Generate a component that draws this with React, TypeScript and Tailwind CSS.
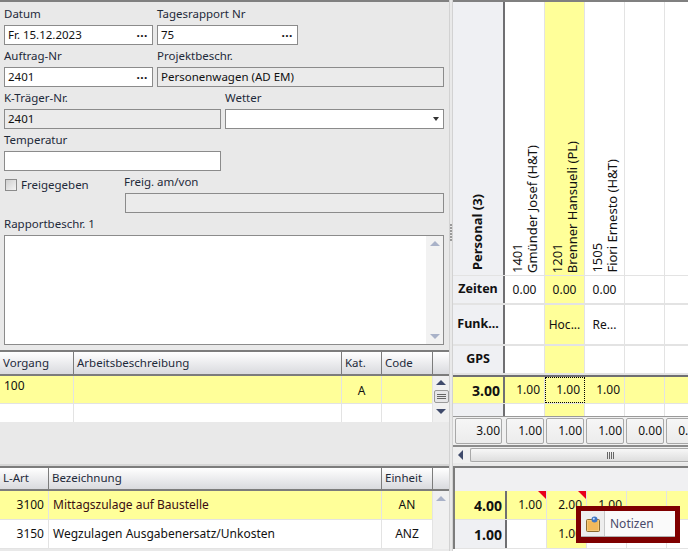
import React from "react";

const YELLOW = "bg-[#ffff99]";

function Label({ children, className = "" }: { children?: React.ReactNode; className?: string }) {
  return <div className={`font-['Roboto',sans-serif] text-[11.5px] leading-[16px] text-[#1e2a3a] ${className}`}>{children}</div>;
}

function Field({
  value,
  disabled,
  dots,
  arrow,
  className = "",
}: {
  value?: string;
  disabled?: boolean;
  dots?: boolean;
  arrow?: boolean;
  className?: string;
}) {
  return (
    <div
      className={`h-[20px] border border-[#8b8b8b] flex items-center justify-between pl-[3px] pr-[4px] font-['Roboto',sans-serif] text-[11.5px] text-[#111] ${
        disabled ? "bg-[#ebebeb]" : "bg-white"
      } ${className}`}
    >
      <span>{value}</span>
      {dots && <span className="text-[12px] leading-none font-bold tracking-[0.5px] mb-[4px]">...</span>}
      {arrow && <span className="w-0 h-0 border-x-[3px] border-x-transparent border-t-[4px] border-t-[#333]" />}
    </div>
  );
}

function HeaderCell({ children, className = "" }: { children?: React.ReactNode; className?: string }) {
  return (
    <div
      className={`flex items-center pl-[3px] pb-[1px] border-r border-[#7c7c7c] font-['Roboto',sans-serif] text-[11.5px] text-[#1e2a3a] bg-gradient-to-b from-white to-[#d9dade] ${className}`}
    >
      {children}
    </div>
  );
}

function ScrollArrow({ up, className = "" }: { up?: boolean; className?: string }) {
  return (
    <span
      className={`block w-0 h-0 border-x-[5px] border-x-transparent ${
        up ? "border-b-[5px]" : "border-t-[5px]"
      } ${className}`}
    />
  );
}

function TopGrid() {
  const cols = "grid-cols-[74px_268px_40px_51px_16px]";
  return (
    <div className="relative">
      <div className={`grid ${cols} h-[26px] border-y-2 border-y-[#7c7c7c] border-r border-r-[#7c7c7c]`}>
        <HeaderCell>Vorgang</HeaderCell>
        <HeaderCell>Arbeitsbeschreibung</HeaderCell>
        <HeaderCell>Kat.</HeaderCell>
        <HeaderCell>Code</HeaderCell>
        <HeaderCell className="border-r-0" />
      </div>
      <div className={`grid ${cols} grid-rows-[28px_18px] text-[12px] text-[#111]`}>
        <div className={`${YELLOW} border-r border-b border-[#e3e3e3] pl-[4px] pt-[1px]`}>100</div>
        <div className={`${YELLOW} border-r border-b border-[#e3e3e3]`} />
        <div className={`${YELLOW} border-r border-b border-[#e3e3e3] flex items-center justify-center pt-[2px]`}>A</div>
        <div className={`${YELLOW} border-r border-b border-[#e3e3e3]`} />
        <div className="row-span-2 bg-[#f0f0f0] flex flex-col items-center pt-[4px]">
          <ScrollArrow up className="border-b-[#3f4a6b]" />
          <div className="mt-[5px] w-[15px] h-[13px] border border-[#9a9a9a] rounded-[2px] bg-[#e6e6e8] flex flex-col items-center justify-center gap-[1px]">
            <span className="w-[9px] h-px bg-[#666]" />
            <span className="w-[9px] h-px bg-[#666]" />
            <span className="w-[9px] h-px bg-[#666]" />
          </div>
          <ScrollArrow className="mt-[6px] border-t-[#3f4a6b]" />
        </div>
        <div className="bg-white border-r border-[#e3e3e3]" />
        <div className="bg-white border-r border-[#e3e3e3]" />
        <div className="bg-white border-r border-[#e3e3e3]" />
        <div className="bg-white border-r border-[#e3e3e3]" />
      </div>
    </div>
  );
}

function BottomGrid() {
  const cols = "grid-cols-[49px_333px_51px_16px]";
  const rows = [
    { nr: "3100", text: "Mittagszulage auf Baustelle", unit: "AN", bg: YELLOW, color: "text-[#3a0d12]" },
    { nr: "3150", text: "Wegzulagen Ausgabenersatz/Unkosten", unit: "ANZ", bg: "bg-white", color: "text-[#111]" },
  ];
  return (
    <div>
      <div className={`grid ${cols} h-[25px] border-y-2 border-y-[#7c7c7c] border-r border-r-[#7c7c7c]`}>
        <HeaderCell>L-Art</HeaderCell>
        <HeaderCell>Bezeichnung</HeaderCell>
        <HeaderCell>Einheit</HeaderCell>
        <HeaderCell className="border-r-0" />
      </div>
      <div className={`grid ${cols} text-[12px]`}>
        {rows.map((r) => (
          <React.Fragment key={r.nr}>
            <div className={`${r.bg} h-[29px] border-r border-b border-[#e3e3e3] flex items-center justify-end pr-[4px] text-[#111]`}>{r.nr}</div>
            <div className={`${r.bg} h-[29px] border-r border-b border-[#e3e3e3] flex items-center pl-[4px] ${r.color}`}>{r.text}</div>
            <div className={`${r.bg} h-[29px] border-r border-b border-[#e3e3e3] flex items-center justify-center text-[#111]`}>{r.unit}</div>
            {r.nr === "3100" ? (
              <div className="row-span-2 bg-[#f0f0f0] flex justify-center pt-[5px]">
                <ScrollArrow up className="border-b-[#a9b2c8]" />
              </div>
            ) : null}
          </React.Fragment>
        ))}
      </div>
    </div>
  );
}

function LeftPane() {
  return (
    <div className="w-[449px] shrink-0 flex flex-col bg-[#e9e9e9]">
      <div className="border-t-2 border-[#808080] h-[350px] pl-[4px] pr-[5px]">
        <div className="flex gap-[4px] h-[23px] items-center">
          <Label className="w-[149px]">Datum</Label>
          <Label>Tagesrapport Nr</Label>
        </div>
        <div className="flex gap-[4px]">
          <Field value="Fr. 15.12.2023" dots className="w-[149px]" />
          <Field value="75" dots className="w-[141px]" />
        </div>
        <div className="flex gap-[4px] h-[22px] items-center">
          <Label className="w-[149px]">Auftrag-Nr</Label>
          <Label>Projektbeschr.</Label>
        </div>
        <div className="flex gap-[4px]">
          <Field value="2401" dots className="w-[149px]" />
          <Field value="Personenwagen (AD EM)" disabled className="flex-1" />
        </div>
        <div className="flex gap-[4px] h-[22px] items-center">
          <Label className="w-[217px]">K-Träger-Nr.</Label>
          <Label>Wetter</Label>
        </div>
        <div className="flex gap-[4px]">
          <Field value="2401" disabled className="w-[217px]" />
          <Field arrow className="flex-1" />
        </div>
        <div className="flex h-[22px] items-center">
          <Label>Temperatur</Label>
        </div>
        <Field className="w-[217px]" />
        <div className="flex h-[22px]">
          <div className="w-[120px] flex items-center gap-[4px] pl-[1px] pt-[6px]">
            <span className="w-[12px] h-[12px] border border-[#8b8b8b] bg-gradient-to-br from-[#cfcfcf] to-[#f4f4f4]" />
            <Label>Freigegeben</Label>
          </div>
          <Label className="pt-[3px]">Freig. am/von</Label>
        </div>
        <div className="pl-[121px]">
          <Field disabled />
        </div>
        <div className="flex h-[22px] items-center">
          <Label>Rapportbeschr. 1</Label>
        </div>
        <div className="h-[110px] border border-[#8b8b8b] bg-white flex justify-end">
          <div className="w-[17px] bg-[#f2f2f2] flex flex-col items-center justify-between py-[5px]">
            <ScrollArrow up className="border-b-[#a9b2c8]" />
            <ScrollArrow className="border-t-[#a9b2c8]" />
          </div>
        </div>
      </div>
      <TopGrid />
      <div className="h-[44px] border-b-2 border-[#d6d6d6]" />
      <BottomGrid />
    </div>
  );
}

function Splitter() {
  return (
    <div className="w-[4px] shrink-0 bg-[#e9e9e9] border-x border-[#d2d2d2] flex flex-col items-center pt-[224px] gap-px">
      {[0, 1, 2, 3, 4, 5].map((i) => (
        <span key={i} className="w-[2px] h-[2px] bg-[#9a9a9a]" />
      ))}
    </div>
  );
}

const people = [
  { nr: "1401", name: "Gmünder Josef (H&T)" },
  { nr: "1201", name: "Brenner Hansueli (PL)", on: true },
  { nr: "1505", name: "Fiori Ernesto (H&T)" },
  { nr: "", name: "" },
  { nr: "", name: "" },
];

function Divider() {
  return <div className="w-[2px] shrink-0 bg-[#6f6f72]" />;
}

function Row({
  head,
  height,
  values,
}: {
  head: React.ReactNode;
  height: string;
  values: (string | undefined)[];
}) {
  return (
    <div className={`flex ${height} border-b-2 border-[#e3e3e3]`}>
      <div className="w-[50px] shrink-0 bg-[#eff0f3] flex items-center justify-center text-[12.5px] font-bold text-[#111]">
        {head}
      </div>
      <Divider />
      {people.map((p, i) => (
        <div
          key={i}
          className={`w-[40px] shrink-0 border-r border-[#e3e3e3] flex items-center justify-center text-[12px] text-[#111] ${p.on ? YELLOW : "bg-white"}`}
        >
          {values[i]}
        </div>
      ))}
    </div>
  );
}

function LowerRow({
  total,
  values,
  yellowAll,
  notes = [],
}: {
  total: string;
  values: string[];
  yellowAll?: boolean;
  notes?: number[];
}) {
  return (
    <div className={`flex h-[29px] border-b border-[#e3e3e3] text-[12px] text-[#111] ${yellowAll ? YELLOW : "bg-white"}`}>
      <div className={`w-[50px] shrink-0 flex items-center justify-end pr-[3px] text-[14px] font-bold ${yellowAll ? "" : "bg-[#eff0f3]"}`}>{total}</div>
      <Divider />
      {values.map((v, i) => (
        <div
          key={i}
          className={`relative w-[40px] shrink-0 border-r border-[#e3e3e3] flex items-center justify-end pr-[4px] ${
            i === 1 ? YELLOW : ""
          }`}
        >
          {v}
          {notes.includes(i) && (
            <span className="absolute top-0 right-0 w-0 h-0 border-l-[8px] border-l-transparent border-t-[8px] border-t-[#e8001c]" />
          )}
        </div>
      ))}
    </div>
  );
}

function RightPane() {
  return (
    <div className="flex-1 min-w-0 overflow-hidden bg-white">
      <div className="flex h-[275px] border-t-2 border-[#808080]">
        <div className="w-[50px] shrink-0 bg-[#eff0f3] flex items-end justify-center pb-[5px]">
          <span className="[writing-mode:vertical-rl] rotate-180 font-bold text-[13px] text-[#111]">Personal (3)</span>
        </div>
        <Divider />
        {people.map((p, i) => (
          <div
            key={i}
            className={`w-[40px] shrink-0 border-r border-[#e3e3e3] flex items-end pb-[2px] pl-[5px] ${p.on ? YELLOW : "bg-white"}`}
          >
            <span className="[writing-mode:vertical-rl] rotate-180 text-[13px] leading-[15px] text-[#111] whitespace-pre-line">
              {p.nr}
              {p.nr ? "\n" : ""}
              {p.name}
            </span>
          </div>
        ))}
      </div>
      <div className="border-t border-[#e3e3e3]">
        <Row head="Zeiten" height="h-[29px]" values={["0.00", "0.00", "0.00"]} />
        <Row head="Funk..." height="h-[41px]" values={[undefined, "Hoc...", "Re..."]} />
        <Row head="GPS" height="h-[29px]" values={[]} />
      </div>
      <div className="flex h-[29px] border-t-2 border-[#6f6f72] border-b border-b-[#e3e3e3] bg-[#ffff99] text-[12px] text-[#111]">
        <div className="w-[50px] shrink-0 flex items-center justify-end pr-[3px] text-[14px] font-bold">3.00</div>
        <Divider />
        {["1.00", "1.00", "1.00", "", ""].map((v, i) => (
          <div
            key={i}
            className={`relative w-[40px] shrink-0 border-r border-[#e3e3e3] flex items-center justify-end pr-[4px] ${
              i === 1 ? "border border-dotted border-black" : ""
            }`}
          >
            {v}
          </div>
        ))}
      </div>
      <div className="flex h-[12px]">
        <div className="w-[50px] shrink-0 bg-[#eff0f3]" />
        <Divider />
        {people.map((p, i) => (
          <div key={i} className={`w-[40px] shrink-0 border-r border-[#e3e3e3] ${p.on ? YELLOW : "bg-white"}`} />
        ))}
      </div>
      <div className="flex h-[29px] gap-[2px] border-t border-[#9a9a9a] bg-[#f0f0f0] pl-[2px] pt-[1px] text-[12px] text-[#111]">
        {[
          ["3.00", "w-[47px] mr-[2px]"],
          ["1.00", "w-[38px]"],
          ["1.00", "w-[38px]"],
          ["1.00", "w-[38px]"],
          ["0.00", "w-[38px]"],
          ["0.00", "w-[38px]"],
        ].map(([v, w], i) => (
          <div
            key={i}
            className={`${w} h-[26px] shrink-0 border border-[#a8a8a8] rounded-[2px] bg-gradient-to-b from-[#f6f6f6] to-[#ececec] flex items-center justify-end pr-[1px]`}
          >
            {v}
          </div>
        ))}
      </div>
      <div className="flex h-[18px] items-center border-t-2 border-[#8b8b8b] bg-[#f0f0f0] pl-[5px]">
        <span className="w-0 h-0 border-y-[5px] border-y-transparent border-r-[5px] border-r-[#3f4a6b]" />
        <div className="ml-[7px] flex-1 h-[14px] border border-r-0 border-[#a8a8a8] rounded-l-[2px] bg-gradient-to-b from-[#f7f7f7] to-[#dedede] flex items-center gap-px pl-[136px]">
          <span className="w-px h-[7px] bg-[#666]" />
          <span className="w-px h-[7px] bg-[#666]" />
          <span className="w-px h-[7px] bg-[#666]" />
          <span className="w-px h-[7px] bg-[#666]" />
        </div>
      </div>
      <div className="h-[3px] bg-[#e9e9e9]" />
      <div className="border-t-2 border-[#7c7c7c] border-l-2 border-l-[#7c7c7c]">
        <div className="h-[23px] bg-[#f0f0f2]" />
        <LowerRow total="4.00" values={["1.00", "2.00", "1.00", "", ""]} yellowAll notes={[0, 1]} />
        <LowerRow total="1.00" values={["", "1.00", "", "", ""]} />
      </div>
    </div>
  );
}

function NoteMenu() {
  return (
    <div className="absolute left-[576px] top-[506px] w-[104px] h-[37px] border-[5px] border-b-[6px] border-[#7f0000] bg-[#fafafa]">
      <div className="flex h-full border-b border-[#b0b0b0] font-['Roboto',sans-serif] text-[12px] text-[#4a4a6a]">
        <div className="w-[24px] bg-[#eeeeee] border-r border-[#c8c8c8] flex items-center justify-center">
          <svg width="16" height="16" viewBox="0 0 16 16">
            <rect x="1.5" y="3.5" width="13" height="12" rx="1" fill="#f5c878" stroke="#8a6a30" />
            <rect x="3" y="5" width="10" height="9" fill="#f2b95c" />
            <circle cx="9.5" cy="3.5" r="3" fill="#3f76c4" />
            <circle cx="8.8" cy="2.8" r="1" fill="#cfe2ff" />
          </svg>
        </div>
        <span className="pl-[5px] flex items-center">Notizen</span>
      </div>
    </div>
  );
}

export default function App() {
  return (
    <div className="relative w-[688px] h-[551px] overflow-hidden flex bg-white font-['Noto_Sans',sans-serif]">
      <LeftPane />
      <Splitter />
      <RightPane />
      <NoteMenu />
    </div>
  );
}
